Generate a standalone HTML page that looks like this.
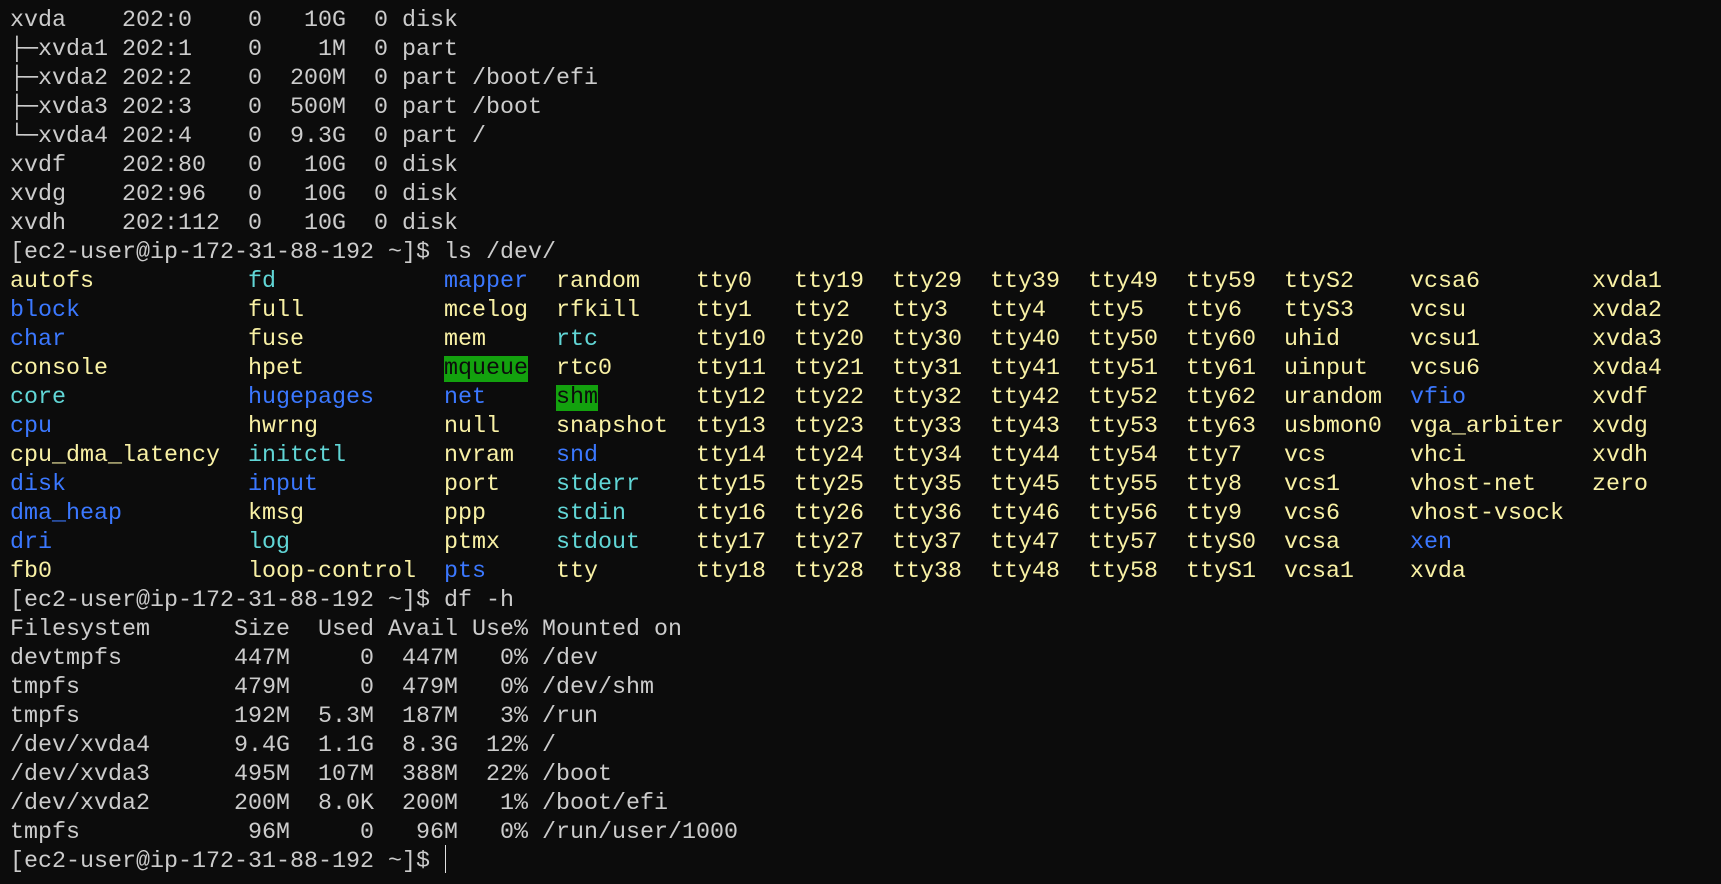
<!DOCTYPE html>
<html><head><meta charset="utf-8"><style>
html,body{margin:0;padding:0;background:#0c0c0c;width:1721px;height:884px;overflow:hidden;position:relative}
pre{margin:0;padding:7px 0 0 10px;font-family:"Liberation Mono","DejaVu Sans Mono",monospace;font-size:23.333px;line-height:29px;color:#cccccc;white-space:pre}
.y{color:#f9f1a5}.b{color:#3b78ff}.c{color:#61d6d6}.g{background:#13a10e;color:#0c0c0c}
.cur{position:absolute;left:445px;top:845px;width:1px;height:28px;background:#e0e0e0}
</style></head><body><pre>xvda    202:0    0   10G  0 disk
├─xvda1 202:1    0    1M  0 part 
├─xvda2 202:2    0  200M  0 part /boot/efi
├─xvda3 202:3    0  500M  0 part /boot
└─xvda4 202:4    0  9.3G  0 part /
xvdf    202:80   0   10G  0 disk
xvdg    202:96   0   10G  0 disk
xvdh    202:112  0   10G  0 disk
[ec2-user@ip-172-31-88-192 ~]$ ls /dev/
<span class=y>autofs</span>           <span class=c>fd</span>            <span class=b>mapper</span>  <span class=y>random    tty0   tty19  tty29  tty39  tty49  tty59  ttyS2    vcsa6        xvda1</span>
<span class=b>block</span>            <span class=y>full</span>          <span class=y>mcelog  rfkill    tty1   tty2   tty3   tty4   tty5   tty6   ttyS3    vcsu         xvda2</span>
<span class=b>char</span>             <span class=y>fuse</span>          <span class=y>mem</span>     <span class=c>rtc</span>       <span class=y>tty10  tty20  tty30  tty40  tty50  tty60  uhid     vcsu1        xvda3</span>
<span class=y>console</span>          <span class=y>hpet</span>          <span class=g>mqueue</span>  <span class=y>rtc0      tty11  tty21  tty31  tty41  tty51  tty61  uinput   vcsu6        xvda4</span>
<span class=c>core</span>             <span class=b>hugepages</span>     <span class=b>net</span>     <span class=g>shm</span>       <span class=y>tty12  tty22  tty32  tty42  tty52  tty62  urandom</span>  <span class=b>vfio</span>         <span class=y>xvdf</span>
<span class=b>cpu</span>              <span class=y>hwrng         null    snapshot  tty13  tty23  tty33  tty43  tty53  tty63  usbmon0  vga_arbiter  xvdg</span>
<span class=y>cpu_dma_latency</span>  <span class=c>initctl</span>       <span class=y>nvram</span>   <span class=b>snd</span>       <span class=y>tty14  tty24  tty34  tty44  tty54  tty7   vcs      vhci         xvdh</span>
<span class=b>disk</span>             <span class=b>input</span>         <span class=y>port</span>    <span class=c>stderr</span>    <span class=y>tty15  tty25  tty35  tty45  tty55  tty8   vcs1     vhost-net    zero</span>
<span class=b>dma_heap</span>         <span class=y>kmsg          ppp</span>     <span class=c>stdin</span>     <span class=y>tty16  tty26  tty36  tty46  tty56  tty9   vcs6     vhost-vsock</span>
<span class=b>dri</span>              <span class=c>log</span>           <span class=y>ptmx</span>    <span class=c>stdout</span>    <span class=y>tty17  tty27  tty37  tty47  tty57  ttyS0  vcsa</span>     <span class=b>xen</span>
<span class=y>fb0              loop-control</span>  <span class=b>pts</span>     <span class=y>tty       tty18  tty28  tty38  tty48  tty58  ttyS1  vcsa1    xvda</span>
[ec2-user@ip-172-31-88-192 ~]$ df -h
Filesystem      Size  Used Avail Use% Mounted on
devtmpfs        447M     0  447M   0% /dev
tmpfs           479M     0  479M   0% /dev/shm
tmpfs           192M  5.3M  187M   3% /run
/dev/xvda4      9.4G  1.1G  8.3G  12% /
/dev/xvda3      495M  107M  388M  22% /boot
/dev/xvda2      200M  8.0K  200M   1% /boot/efi
tmpfs            96M     0   96M   0% /run/user/1000
[ec2-user@ip-172-31-88-192 ~]$ </pre><div class="cur"></div></body></html>
